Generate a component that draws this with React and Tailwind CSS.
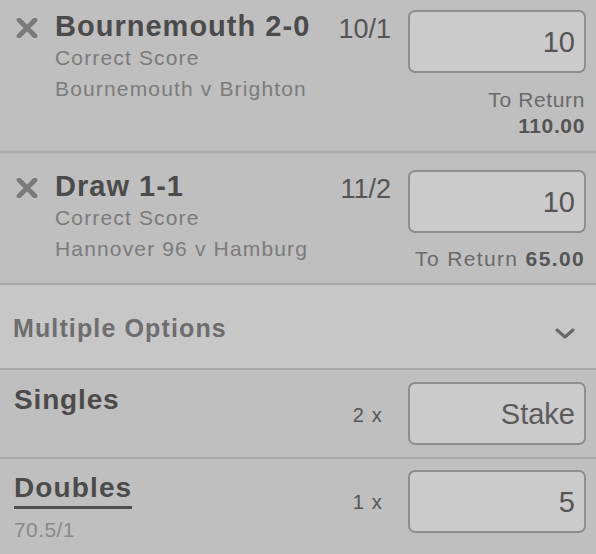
import { useState } from 'react';

const bets = [
  {
    title: 'Bournemouth 2-0',
    market: 'Correct Score',
    event: 'Bournemouth v Brighton',
    odds: '10/1',
    stake: '10',
    returns: '110.00',
    stacked: true,
  },
  {
    title: 'Draw 1-1',
    market: 'Correct Score',
    event: 'Hannover 96 v Hamburg',
    odds: '11/2',
    stake: '10',
    returns: '65.00',
    stacked: false,
  },
];

function RemoveIcon() {
  return (
    <svg viewBox="0 0 22 20" className="w-[22px] h-[20px] shrink-0 mt-[8px]">
      <path d="M3 2 L19 18 M19 2 L3 18" stroke="#7a7a7a" strokeWidth="4.8" strokeLinecap="round" fill="none" />
    </svg>
  );
}

function Chevron() {
  return (
    <svg viewBox="0 0 20 11" className="w-[20px] h-[11px] mt-[13px]">
      <path d="M2 2 L10 9 L18 2" stroke="#676767" strokeWidth="3" strokeLinecap="round" strokeLinejoin="round" fill="none" />
    </svg>
  );
}

function StakeBox({ value, placeholder, onChange }) {
  return (
    <div className="w-[178px] h-[63px] rounded-[7px] border-2 border-[#8e8e8e] bg-[#cbcbcb] flex items-center justify-end pr-[9px] pt-[2px]">
      <input
        value={value}
        placeholder={placeholder}
        onChange={(e) => onChange(e.target.value)}
        className="w-full bg-transparent text-right text-[29px] leading-[29px] text-[#555] placeholder:text-[#5c5c5c] outline-none"
      />
    </div>
  );
}

function BetRow({ bet, first }) {
  const [stake, setStake] = useState(bet.stake);

  return (
    <div className={`flex pl-4 pr-[10px] ${first ? 'h-[151px] pt-[10px]' : 'h-[130px] pt-[17px]'}`}>
      <RemoveIcon />
      <div className="flex-1 ml-[17px]">
        <div className="text-[29px] leading-[32px] font-bold tracking-[0.035em] text-[#4b4b4b] whitespace-nowrap">{bet.title}</div>
        <div className="mt-[1px] text-[21px] leading-[30.5px] tracking-[0.055em] text-[#7b7b7b]">
          <div>{bet.market}</div>
          <div>{bet.event}</div>
        </div>
      </div>
      <div className="mt-[4px] mr-[17px] text-[27px] leading-[30px] text-[#555]">{bet.odds}</div>
      <div className="w-[178px] flex flex-col items-end">
        <StakeBox value={stake} onChange={setStake} />
        {bet.stacked ? (
          <div className="mt-[14px] pr-[1px] text-right text-[21px] leading-[26px] tracking-[0.03em] text-[#6a6a6a]">
            <div>To Return</div>
            <div className="font-bold text-[#555]">{bet.returns}</div>
          </div>
        ) : (
          <div className="mt-[13px] pr-[1px] text-[21px] leading-[26px] tracking-[0.065em] text-[#6a6a6a] whitespace-nowrap">
            To Return <span className="font-bold text-[#555]">{bet.returns}</span>
          </div>
        )}
      </div>
    </div>
  );
}

function Divider() {
  return <div className="h-[2px] bg-[#a9a9a9]" />;
}

export default function App() {
  const [singles, setSingles] = useState('');
  const [doubles, setDoubles] = useState('5');

  return (
    <div className="w-[596px] h-[554px] overflow-hidden bg-[#bfbfbf] font-['Liberation_Sans',Arial,sans-serif]">
      {bets.map((bet, i) => (
        <div key={bet.title}>
          <BetRow bet={bet} first={i === 0} />
          <Divider />
        </div>
      ))}

      <button className="w-full h-[83px] bg-[#c7c7c7] flex items-center justify-between pl-[13px] pr-[21px]">
        <span className="pt-[3px] text-[25px] leading-[30px] font-bold tracking-[0.045em] text-[#6e6e6e]">Multiple Options</span>
        <Chevron />
      </button>
      <Divider />

      <div className="h-[87px] flex pl-[14px] pr-[10px] pt-[12px]">
        <div className="flex-1 mt-[2px] text-[28px] leading-[32px] font-bold tracking-[0.03em] text-[#4b4b4b]">Singles</div>
        <div className="mt-[21px] mr-[25px] text-[20px] leading-[24px] tracking-[0.06em] text-[#555]">2 x</div>
        <StakeBox value={singles} placeholder="Stake" onChange={setSingles} />
      </div>
      <Divider />

      <div className="flex pl-[14px] pr-[10px] pt-[11px]">
        <div className="flex-1 mt-[2px]">
          <span className="inline-block pb-[2px] border-b-[3px] border-[#4f4f4f] text-[28px] leading-[32px] font-bold tracking-[0.04em] text-[#4b4b4b]">
            Doubles
          </span>
          <div className="mt-[8px] text-[21px] leading-[26px] tracking-[0.02em] text-[#8a8a8a]">70.5/1</div>
        </div>
        <div className="mt-[20px] mr-[25px] text-[20px] leading-[24px] tracking-[0.06em] text-[#555]">1 x</div>
        <StakeBox value={doubles} onChange={setDoubles} />
      </div>
    </div>
  );
}
